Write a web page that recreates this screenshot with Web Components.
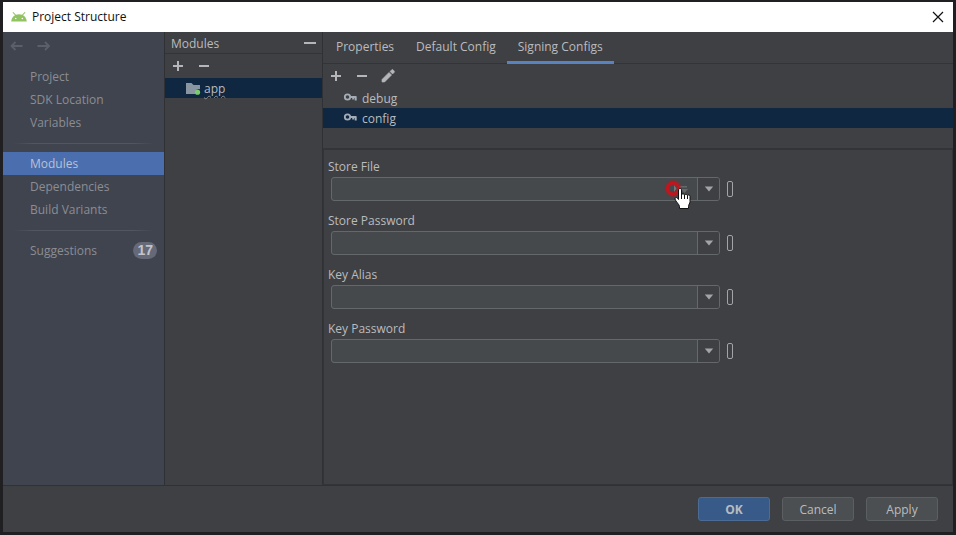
<!DOCTYPE html>
<html lang="en">
<head>
<meta charset="utf-8">
<title>Project Structure</title>
<style>
  html, body { height: 100%; margin: 0; background: #202023; }
  body { box-sizing: border-box; padding: 2px 3px 3px; overflow: hidden;
    font: 12px/20px "Open Sans", "Noto Sans", sans-serif; color: #bbbbbf; }
</style>
</head>
<body>
<project-structure></project-structure>

<script>
const define = (name, html, setup) => {
  const tpl = document.createElement('template');
  tpl.innerHTML = html;
  customElements.define(name, class extends HTMLElement {
    constructor() {
      super();
      this.attachShadow({ mode: 'open' }).append(tpl.content.cloneNode(true));
    }
    connectedCallback() { if (setup) setup(this, this.shadowRoot); }
  });
};

const ICONS = {
  plus: '<path d="M8 3v10M3 8h10" fill="none" stroke="#b4b6b9" stroke-width="2"/>',
  minus: '<path d="M3 8h10" fill="none" stroke="#b4b6b9" stroke-width="2"/>',
  hide: '<path d="M2 8h12" fill="none" stroke="#b4b6b9" stroke-width="2"/>',
  pencil: '<path d="M2 11.400V14h2.600l7-7L9 4.400zM10 3.400l2.600 2.600 1.700-1.700c.3-.3.300-.7 0-1L13 1.700c-.3-.3-.7-.3-1 0z" fill="#b4b6b9" stroke="#b4b6b9" stroke-width=".6"/>',
  back: '<path d="M13.500 8H2.500M6.500 4L2.500 8l4 4" fill="none" stroke="#5a5f69" stroke-width="1.800"/>',
  forward: '<path d="M2.500 8h11.500M10 4l4 4-4 4" fill="none" stroke="#5a5f69" stroke-width="1.800"/>',
  key: '<circle cx="4.500" cy="7" r="2.700" fill="none" stroke="#a3acb7" stroke-width="1.800"/><path d="M7.200 7h6.300M10.200 7v2.500M12.700 7v3.500" fill="none" stroke="#a3acb7" stroke-width="2"/>',
  folder: '<path d="M1 3h5.500l2 2H15v4.200a3.600 3.600 0 0 0-4.600 4.800H1z" fill="#8996a2"/><circle cx="12.500" cy="12.200" r="2.600" fill="#7ccb72"/>',
  android: '<path d="M.2 12.500C.4 9.600 1.900 7.400 4 6.200L1.500 3.500l.8-.5 2.600 2.800a9.500 9.500 0 0 1 6.200 0L13.700 3l.8.500L12 6.200c2.100 1.200 3.600 3.400 3.800 6.300z" fill="#8fc461"/><circle cx="4.700" cy="9.500" r=".8" fill="#fff"/><circle cx="11.300" cy="9.500" r=".8" fill="#fff"/>',
  close: '<path d="M3 3l10 10M13 3L3 13" fill="none" stroke="#111" stroke-width="1.200"/>',
  down: '<path d="M3.800 5.500h8.400L8 10.500z" fill="#a3a4a7"/>'
};

define('ps-icon', `
  <style>
    :host { display: inline-flex; flex: none; width: 16px; height: 16px; }
    svg { width: 100%; height: 100%; }
  </style>
  <svg viewBox="0 0 16 16" aria-hidden="true"></svg>`,
  (el, root) => { root.querySelector('svg').innerHTML = ICONS[el.getAttribute('name')]; });

define('icon-button', `
  <style>
    :host { display: inline-flex; }
    button { display: flex; padding: 0; border: 0; background: none; }
  </style>
  <button type="button"></button>`,
  (el, root) => {
    const button = root.querySelector('button');
    const icon = document.createElement('ps-icon');
    icon.setAttribute('name', el.getAttribute('icon'));
    button.setAttribute('aria-label', el.getAttribute('label'));
    button.replaceChildren(icon);
  });

define('title-bar', `
  <style>
    :host { display: flex; align-items: center; gap: 5px; height: 30px; padding: 0 7px 0 8px;
      background: #fff; color: #111; flex: none; }
    h1 { flex: 1; margin: 0; font: inherit; }
  </style>
  <ps-icon name="android"></ps-icon>
  <h1><slot></slot></h1>
  <icon-button icon="close" label="Close"></icon-button>`);

define('nav-item', `
  <style>
    :host { display: block; }
    a { display: flex; align-items: center; justify-content: space-between; height: 23px;
      padding: 0 7px 0 27px; color: #8b8d94; text-decoration: none; }
    :host([selected]) a { background: #4b6eaf; color: #b9c1d4; }
    ::slotted(b) { padding: 0 4px; border-radius: 9px; background: #656978; color: #c3c4cb;
      font: bold 14px/17px "Liberation Sans", sans-serif; }
  </style>
  <a href="#"><span><slot></slot></span><slot name="badge"></slot></a>`);

define('side-nav', `
  <style>
    :host { display: flex; flex-direction: column; box-sizing: border-box; background: #40444e;
      border-right: 1px solid #303135; }
    .history { display: flex; gap: 10px; padding: 6px 6px 11px; }
    hr { width: 88%; height: 1px; margin: 9px auto 8px; border: 0;
      background: linear-gradient(90deg, transparent, #53565f 15%, #53565f 85%, transparent); }
  </style>
  <div class="history">
    <icon-button icon="back" label="Back"></icon-button>
    <icon-button icon="forward" label="Forward"></icon-button>
  </div>
  <nav>
    <nav-item>Project</nav-item>
    <nav-item>SDK Location</nav-item>
    <nav-item>Variables</nav-item>
    <hr>
    <nav-item selected>Modules</nav-item>
    <nav-item>Dependencies</nav-item>
    <nav-item>Build Variants</nav-item>
    <hr>
    <nav-item>Suggestions<b slot="badge">17</b></nav-item>
  </nav>`);

define('tool-bar', `
  <style>
    :host { display: flex; align-items: center; gap: 10px; height: 24px; padding: 0 5px; }
  </style>
  <slot></slot>`);

define('list-row', `
  <style>
    :host { display: flex; align-items: center; gap: 3px; height: 20px; padding-left: 20px; }
    :host([selected]) { background: #0f2740; }
    .text { padding-top: 2px; }
  </style>
  <slot name="icon"></slot><span class="text"><slot></slot></span>`);

define('modules-panel', `
  <style>
    :host { display: flex; flex-direction: column; min-width: 0; }
    header { display: flex; align-items: center; justify-content: space-between; height: 21px;
      padding: 0 4px 0 6px; border-bottom: 1px solid #333437; }
    h2 { margin: 0; font: inherit; padding-top: 2px; }
    .module { text-decoration: underline wavy #8b8d90 1px; text-underline-offset: 2px; }
  </style>
  <header><h2>Modules</h2><icon-button icon="hide" label="Hide"></icon-button></header>
  <tool-bar>
    <icon-button icon="plus" label="Add module"></icon-button>
    <icon-button icon="minus" label="Remove module"></icon-button>
  </tool-bar>
  <list-row selected><ps-icon slot="icon" name="folder"></ps-icon><span class="module">app</span></list-row>`);

define('tab-strip', `
  <style>
    :host { display: flex; height: 31px; padding-left: 2px; border-bottom: 1px solid #333437; }
    button { height: 32px; padding: 0 11px; border: 0; border-bottom: 3px solid transparent;
      background: none; color: inherit; font: inherit; }
    button[aria-selected=true] { border-color: #5983bf; }
  </style>
  <button role="tab" aria-selected="false">Properties</button>
  <button role="tab" aria-selected="false">Default Config</button>
  <button role="tab" aria-selected="true">Signing Configs</button>`);

define('combo-field', `
  <style>
    :host { display: block; }
    label { display: block; }
    .row { display: flex; align-items: center; gap: 7px; padding-left: 3px; }
    .combo { position: relative; display: flex; flex: 0 1 389px; box-sizing: border-box; height: 24px;
      border: 1px solid #65686a; border-radius: 3px; background: #45494b; }
    input { flex: 1; min-width: 0; padding: 0 6px; border: 0; background: none; color: inherit;
      font: inherit; outline: 0; }
    .combo button { display: flex; align-items: center; justify-content: center; width: 22px; padding: 0;
      border: 0; border-left: 1px solid #65686a; border-radius: 0 2px 2px 0; background: #3f4043; }
    .bind { width: 6px; height: 16px; box-sizing: border-box; padding: 0; border: 1px solid #a2a4a7;
      border-radius: 2px; background: none; }
  </style>
  <label for="value"></label>
  <div class="row">
    <div class="combo">
      <input id="value" type="text">
      <button type="button" aria-label="Show options"><ps-icon name="down"></ps-icon></button>
      <slot></slot>
    </div>
    <button class="bind" type="button" aria-label="Bind to variable"></button>
  </div>`,
  (el, root) => { root.querySelector('label').textContent = el.getAttribute('label'); });

define('click-pointer', `
  <style>
    :host { position: absolute; top: 0; right: 25px; width: 30px; height: 34px; pointer-events: none; }
    svg { display: block; }
  </style>
  <svg width="30" height="34" viewBox="0 0 30 34" aria-hidden="true">
    <path d="M15 8h8v1.500h-8zM17 11h7l-3.500 4z" fill="#64696b"/>
    <circle cx="9" cy="10.500" r="6" fill="none" stroke="#c5141d" stroke-opacity=".35" stroke-width="5"/>
    <circle cx="9" cy="10.500" r="5.500" fill="none" stroke="#c5141d" stroke-width="3"/>
    <path d="M10 7v7l2.500-3.500z" fill="#74777b"/>
    <path d="M14.500 12c0-2 3-2 3 0v5c0-1.500 3-1.500 3 .2 0-1.200 3-1.200 3 .5 0-1.200 2.500-1 2.500.8v5c0 2-1.500 3-1.500 5v2h-9V28.500c0-2-4-5-4.500-7.500-.2-1.800 1.500-2 2.500-.8l1 1.300z" fill="#fff" stroke="#111"/>
    <path d="M17.500 16v5M20.500 17v4M23.500 18v3" stroke="#111"/>
  </svg>`);

define('signing-configs', `
  <style>
    :host { display: flex; flex-direction: column; min-width: 0; box-sizing: border-box;
      border-left: 1px solid #303135; }
    .configs { min-height: 60px; }
    form { display: flex; flex-direction: column; gap: 10px; flex: 1; padding: 7px 4px;
      border: solid #333437; border-width: 2px 1px 1px; }
  </style>
  <tab-strip role="tablist"></tab-strip>
  <tool-bar>
    <icon-button icon="plus" label="Add"></icon-button>
    <icon-button icon="minus" label="Remove"></icon-button>
    <icon-button icon="pencil" label="Rename"></icon-button>
  </tool-bar>
  <div class="configs">
    <list-row><ps-icon slot="icon" name="key"></ps-icon>debug</list-row>
    <list-row selected><ps-icon slot="icon" name="key"></ps-icon>config</list-row>
  </div>
  <form>
    <combo-field label="Store File"><click-pointer></click-pointer></combo-field>
    <combo-field label="Store Password"></combo-field>
    <combo-field label="Key Alias"></combo-field>
    <combo-field label="Key Password"></combo-field>
  </form>`);

define('dialog-actions', `
  <style>
    :host { display: flex; justify-content: flex-end; gap: 12px; flex: none; padding: 11px 15px;
      border-top: 1px solid #303135; }
    button { width: 72px; height: 24px; padding: 2px 0 0; border: 1px solid #5c5f61; border-radius: 3px;
      background: #4b4f52; color: inherit; font: inherit; }
    .primary { background: #375a88; border-color: #4b6c94; font-weight: bold; }
  </style>
  <button type="button" class="primary">OK</button>
  <button type="button">Cancel</button>
  <button type="button">Apply</button>`);

define('project-structure', `
  <style>
    :host { display: flex; flex-direction: column; height: 100%; background: #3f4043; }
    main { display: grid; grid-template-columns: 162px 157px 1fr; flex: 1; min-height: 0; }
  </style>
  <title-bar>Project Structure</title-bar>
  <main>
    <side-nav></side-nav>
    <modules-panel></modules-panel>
    <signing-configs></signing-configs>
  </main>
  <dialog-actions></dialog-actions>`);
</script>
</body>
</html>
